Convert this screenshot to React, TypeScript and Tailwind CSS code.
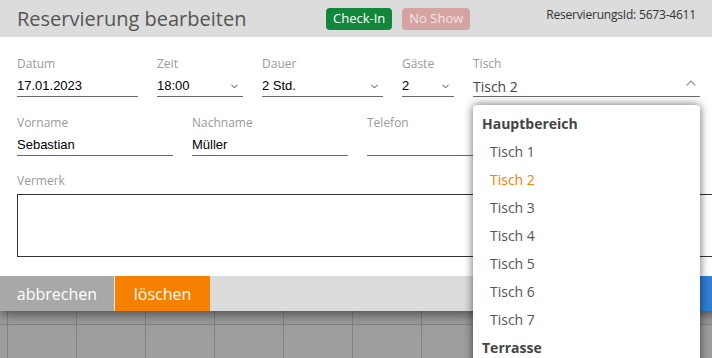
import { ChevronDown, ChevronUp } from "lucide-react";

const sans = "font-['Open_Sans',sans-serif]";
const arial = "font-['Liberation_Sans',Arial,sans-serif]";

const tables = ["Tisch 1", "Tisch 2", "Tisch 3", "Tisch 4", "Tisch 5", "Tisch 6", "Tisch 7"];

function Field({ label, value, width, select }: { label: string; value?: string; width: string; select?: boolean }) {
  return (
    <div className={width}>
      <div className={`${sans} text-[12px] leading-[16px] text-[#9a9a9a]`}>{label}</div>
      <div className="mt-[5px] flex h-[20px] items-center justify-between border-b border-[#6a6a6a] pb-[1px]">
        <span className={`${arial} text-[13px] text-black`}>{value}</span>
        {select && <ChevronDown className="mr-[3px] h-[11px] w-[11px] text-[#333]" strokeWidth={2} />}
      </div>
    </div>
  );
}

export default function App() {
  const cells = Array.from({ length: 11 });
  return (
    <div className="relative h-[358px] w-[712px] overflow-hidden bg-[#9e9e9e]">
      {/* dialog */}
      <div className="relative z-10 flex h-[311px] w-[760px] flex-col bg-white shadow-[0_3px_12px_rgba(0,0,0,0.55)]">
        <div className="flex h-[37px] items-center bg-[#dcdcdc] pl-[17px]">
          <h1 className={`${sans} w-[309px] text-[20px] text-[#555]`}>Reservierung bearbeiten</h1>
          <span className={`${sans} mt-[1px] rounded-[4px] bg-[#10873a] px-[7px] py-[1px] text-[13px] text-white`}>Check-In</span>
          <span className={`${sans} ml-[10px] mt-[1px] rounded-[4px] bg-[#d6a3a3] px-[7px] py-[1px] text-[13px] text-[#f3e2e2]`}>No Show</span>
          <span className={`${sans} ml-[76px] -mt-[8px] text-[12px] tracking-[-0.2px] text-[#333]`}>ReservierungsId: 5673-4611</span>
        </div>

        <div className="flex-1 px-[17px] pt-[19px]">
          <div className="flex gap-[19px]">
            <Field label="Datum" value="17.01.2023" width="w-[121px]" />
            <Field label="Zeit" value="18:00" width="w-[86px]" select />
            <Field label="Dauer" value="2 Std." width="w-[121px]" select />
            <Field label="Gäste" value="2" width="w-[52px]" select />
            <div className="w-[227px]">
              <div className={`${sans} text-[12px] leading-[16px] text-[#9a9a9a]`}>Tisch</div>
              <div className="mt-[5px] flex h-[20px] items-center justify-between border-b border-[#6a6a6a] pb-[1px]">
                <span className={`${sans} text-[14px] text-[#444]`}>Tisch 2</span>
                <ChevronUp className="-mt-[6px] mr-[1px] h-[16px] w-[16px] text-[#9a9a9a]" strokeWidth={1.8} />
              </div>
            </div>
          </div>

          <div className="mt-[18px] flex gap-[19px]">
            <Field label="Vorname" value="Sebastian" width="w-[156px]" />
            <Field label="Nachname" value="Müller" width="w-[156px]" />
            <Field label="Telefon" value="" width="w-[156px]" />
          </div>

          <div className={`${sans} mt-[17px] text-[12px] leading-[16px] text-[#9a9a9a]`}>Vermerk</div>
          <div className="mt-[5px] h-[63px] w-[700px] border border-[#333]" />
        </div>

        <div className="flex h-[35px] bg-[#dcdcdc]">
          <button className={`${sans} w-[115px] border-r border-[#e6e6e6] bg-[#a8a8a8] text-[16px] text-white`}>abbrechen</button>
          <button className={`${sans} w-[95px] bg-[#f68000] text-[16px] text-white`}>löschen</button>
          <div className="flex-1" />
          <button className={`${sans} w-[60px] bg-[#2f7fd6] text-[16px] text-white`} />
        </div>
      </div>

      {/* table grid behind */}
      <div className="flex h-[14px] border-b border-[#848484] pl-[7px]">
        {cells.map((_, i) => (
          <div key={i} className="w-[69px] shrink-0 border-l border-[#848484]" />
        ))}
      </div>
      <div className="flex h-[40px] pl-[7px]">
        {cells.map((_, i) => (
          <div key={i} className="w-[69px] shrink-0 border-l border-[#848484]" />
        ))}
      </div>

      {/* open select menu */}
      <div className="absolute left-[473px] top-[105px] z-20 h-[270px] w-[227px] rounded-[4px] bg-white pt-[5px] shadow-[0_0_10px_rgba(0,0,0,0.6)]">
        <div className={`${sans} h-[28px] pl-[9px] text-[14px] font-bold leading-[28px] text-[#444]`}>Hauptbereich</div>
        {tables.map((t) => (
          <div
            key={t}
            className={`${sans} h-[28px] pl-[17px] text-[14px] leading-[28px] ${t === "Tisch 2" ? "text-[#f68000]" : "text-[#555]"}`}
          >
            {t}
          </div>
        ))}
        <div className={`${sans} h-[28px] pl-[9px] text-[14px] font-bold leading-[28px] text-[#444]`}>Terrasse</div>
      </div>
    </div>
  );
}
